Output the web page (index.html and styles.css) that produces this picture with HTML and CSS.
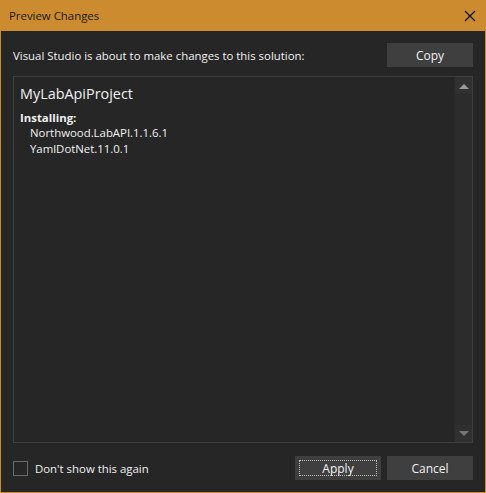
FILE: index.html
```html
<!DOCTYPE html>
<html>
<head>
<meta charset="utf-8">
<link rel="stylesheet" href="styles.css">
</head>
<body>
<div class="window">
  <div class="titlebar">
    <span class="title">Preview Changes</span>
    <svg class="close" width="12" height="12" viewBox="0 0 12 12"><path d="M1 1 L11 11 M11 1 L1 11" stroke="#111" stroke-width="1.2" fill="none"/></svg>
  </div>
  <div class="content">
    <div class="toprow">
      <span class="msg">Visual Studio is about to make changes to this solution:</span>
      <button class="btn">Copy</button>
    </div>
    <div class="listbox">
      <div class="listtext">
        <div class="project">MyLabApiProject</div>
        <div class="section">Installing:</div>
        <div class="item">Northwood.LabAPI.1.1.6.1</div>
        <div class="item">YamlDotNet.11.0.1</div>
      </div>
      <div class="scrollbar">
        <div class="arrow"><svg width="10" height="6" viewBox="0 0 10 6"><path d="M0 6 L5 1 L10 6 Z" fill="#999"/></svg></div>
        <div class="track"></div>
        <div class="arrow"><svg width="10" height="6" viewBox="0 0 10 6"><path d="M0 0 L10 0 L5 5 Z" fill="#777"/></svg></div>
      </div>
    </div>
    <div class="footer">
      <label class="check"><span class="box"></span><span>Don't show this again</span></label>
      <div class="buttons">
        <button class="btn focused"><span class="focusring">Apply</span></button>
        <button class="btn">Cancel</button>
      </div>
    </div>
  </div>
</div>
</body>
</html>
```
FILE: styles.css
```css
html, body {
  margin: 0;
  padding: 0;
  background: #262626;
}
body {
  font-family: "Open Sans", "Noto Sans", sans-serif;
  font-size: 11.4px;
  color: #f1f1f1;
}
.window {
  width: 486px;
  height: 493px;
  box-sizing: border-box;
  border: 1px solid #cb8b2e;
  display: flex;
  flex-direction: column;
  background: #262626;
}
.titlebar {
  height: 30px;
  background: #cb8b2e;
  display: flex;
  align-items: center;
  justify-content: space-between;
  padding: 0 9px 0 8px;
  flex: none;
}
.title {
  color: #1a1a1a;
  font-size: 11.4px;
  margin-top: -1px;
}
.close {
  margin-top: -1px;
}
.content {
  flex: 1;
  display: flex;
  flex-direction: column;
  padding: 12px 12px 11px 12px;
  min-height: 0;
}
.toprow {
  display: flex;
  justify-content: space-between;
  align-items: center;
  height: 24px;
}
.msg {
  color: #f1f1f1;
}
.btn {
  width: 86px;
  height: 24px;
  background: #3f3f3f;
  border: none;
  color: #f1f1f1;
  font-family: inherit;
  font-size: 12px;
  padding: 0;
  display: flex;
  align-items: center;
  justify-content: center;
}
.btn.focused {
  padding: 4px;
  box-sizing: border-box;
}
.focusring {
  flex: 1;
  align-self: stretch;
  border: 1px dotted #bbb;
  display: flex;
  align-items: center;
  justify-content: center;
}
.listbox {
  margin-top: 9px;
  height: 367px;
  box-sizing: border-box;
  border: 1px solid #3f3f3f;
  display: flex;
  flex: none;
}
.listtext {
  flex: 1;
  padding: 6px 6px;
}
.project {
  font-size: 14.4px;
  line-height: 22px;
  margin-bottom: 5px;
}
.section {
  font-weight: bold;
  line-height: 15px;
}
.item {
  padding-left: 10px;
  line-height: 16px;
}
.scrollbar {
  width: 17px;
  display: flex;
  flex-direction: column;
  background: #2c2c2c;
  border-left: 1px solid #2a2a2a;
}
.arrow {
  height: 17px;
  display: flex;
  align-items: center;
  justify-content: center;
  background: #303030;
}
.track {
  flex: 1;
}
.footer {
  margin-top: 13px;
  display: flex;
  justify-content: space-between;
  align-items: center;
  height: 24px;
}
.check {
  display: flex;
  align-items: center;
  gap: 7px;
}
.box {
  width: 13px;
  height: 13px;
  border: 1px solid #6a6a6a;
  display: block;
}
.buttons {
  display: flex;
  gap: 6px;
}
```
